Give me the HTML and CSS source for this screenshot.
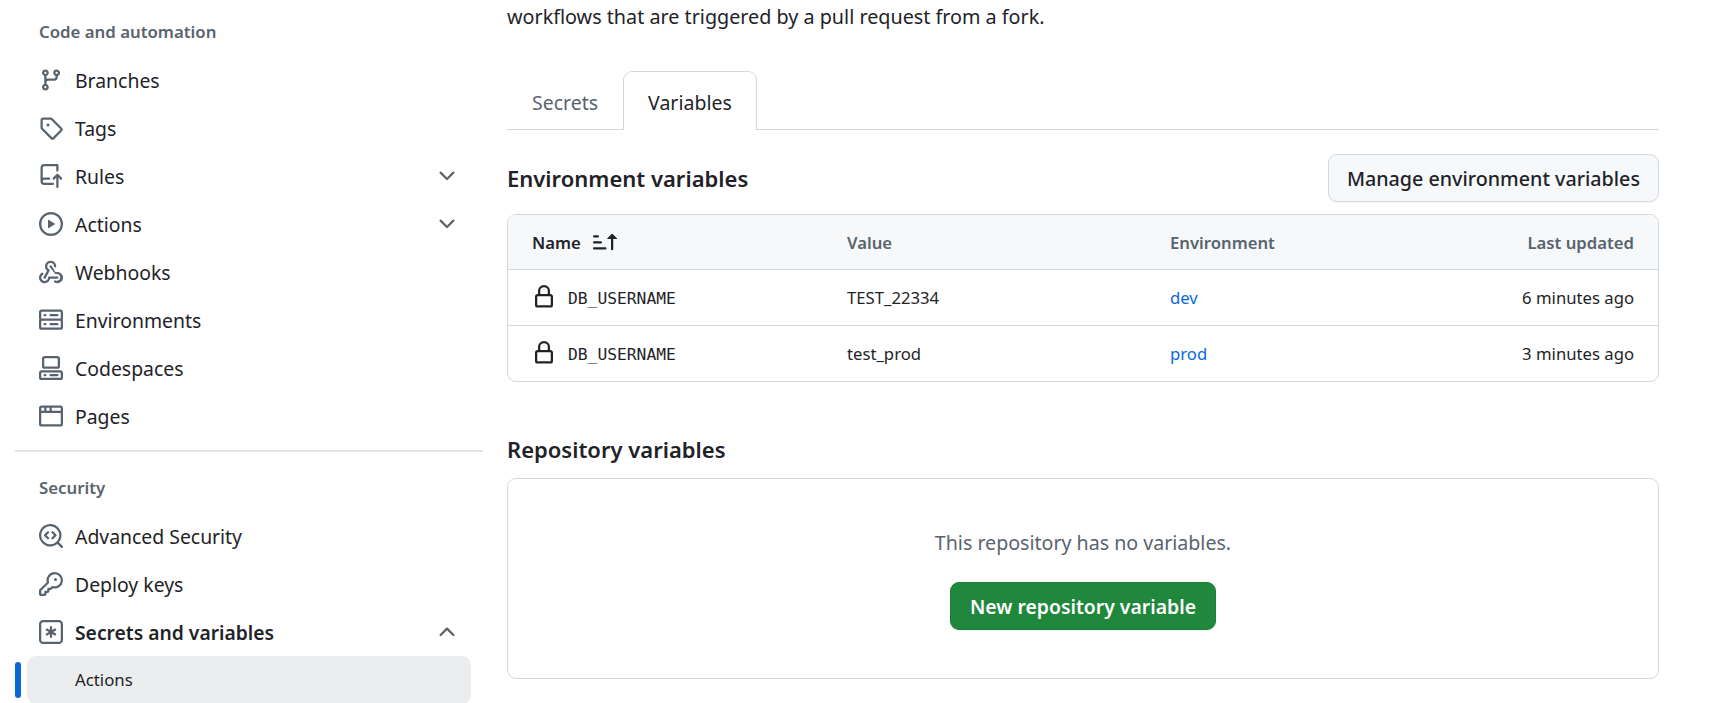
FILE: index.html
```html
<!DOCTYPE html>
<html lang="en">
<head>
<meta charset="utf-8">
<title>Actions secrets and variables</title>
<link rel="stylesheet" href="styles.css">
</head>
<body>
<div class="page">
  <nav class="sidebar">
    <h2 class="nav-heading">Code and automation</h2>
    <a class="nav-item"><svg class="icon" viewBox="0 0 16 16"><path d="M9.5 3.25a2.25 2.25 0 1 1 3 2.122V6A2.5 2.5 0 0 1 10 8.5H6a1 1 0 0 0-1 1v1.128a2.251 2.251 0 1 1-1.5 0V5.372a2.25 2.25 0 1 1 1.5 0v1.836A2.493 2.493 0 0 1 6 7h4a1 1 0 0 0 1-1v-.628A2.25 2.25 0 0 1 9.5 3.25Zm-6 0a.75.75 0 1 0 1.5 0 .75.75 0 0 0-1.5 0Zm8.25-.75a.75.75 0 1 0 0 1.5.75.75 0 0 0 0-1.5ZM4.25 12a.75.75 0 1 0 0 1.5.75.75 0 0 0 0-1.5Z"/></svg><span class="nav-label">Branches</span></a>
    <a class="nav-item"><svg class="icon" viewBox="0 0 16 16"><path d="M1 7.775V2.75C1 1.784 1.784 1 2.75 1h5.025c.464 0 .91.184 1.238.513l6.25 6.25a1.75 1.75 0 0 1 0 2.474l-5.026 5.026a1.75 1.75 0 0 1-2.474 0l-6.25-6.25A1.752 1.752 0 0 1 1 7.775Zm1.5 0c0 .066.026.13.073.177l6.25 6.25a.25.25 0 0 0 .354 0l5.025-5.025a.25.25 0 0 0 0-.354l-6.25-6.25a.25.25 0 0 0-.177-.073H2.75a.25.25 0 0 0-.25.25ZM6 5a1 1 0 1 1 0 2 1 1 0 0 1 0-2Z"/></svg><span class="nav-label">Tags</span></a>
    <a class="nav-item"><svg class="icon" viewBox="0 0 16 16"><path d="M1 2.5A2.5 2.5 0 0 1 3.5 0h8.75a.75.75 0 0 1 .75.75v3.5a.75.75 0 0 1-1.5 0V1.5h-8a1 1 0 0 0-1 1v6.708A2.493 2.493 0 0 1 3.5 9h3.25a.75.75 0 0 1 0 1.5H3.5a1 1 0 0 0 0 2h5.75a.75.75 0 0 1 0 1.5H3.5A2.5 2.5 0 0 1 1 11.5Zm13.23 7.79h-.001l-1.224-1.224v6.184a.75.75 0 0 1-1.5 0V9.066L10.28 10.29a.75.75 0 0 1-1.06-1.06l2.505-2.504a.75.75 0 0 1 1.06 0L15.29 9.23a.751.751 0 0 1-.018 1.042.751.751 0 0 1-1.042.018Z"/></svg><span class="nav-label">Rules</span><svg class="icon chevron" viewBox="0 0 16 16"><path d="M12.78 5.22a.749.749 0 0 1 0 1.06l-4.25 4.25a.749.749 0 0 1-1.06 0L3.22 6.28a.749.749 0 1 1 1.06-1.06L8 8.939l3.72-3.719a.749.749 0 0 1 1.06 0Z"/></svg></a>
    <a class="nav-item"><svg class="icon" viewBox="0 0 16 16"><path d="M8 0a8 8 0 1 1 0 16A8 8 0 0 1 8 0ZM1.5 8a6.5 6.5 0 1 0 13 0 6.5 6.5 0 0 0-13 0Zm4.879-2.773 4.264 2.559a.25.25 0 0 1 0 .428l-4.264 2.559A.25.25 0 0 1 6 10.559V5.442a.25.25 0 0 1 .379-.215Z"/></svg><span class="nav-label">Actions</span><svg class="icon chevron" viewBox="0 0 16 16"><path d="M12.78 5.22a.749.749 0 0 1 0 1.06l-4.25 4.25a.749.749 0 0 1-1.06 0L3.22 6.28a.749.749 0 1 1 1.06-1.06L8 8.939l3.72-3.719a.749.749 0 0 1 1.06 0Z"/></svg></a>
    <a class="nav-item"><svg class="icon" viewBox="0 0 16 16"><path d="M5.5 4.25a2.25 2.25 0 0 1 4.5 0 .75.75 0 0 0 1.5 0 3.75 3.75 0 1 0-6.14 2.889l-2.272 4.258a.75.75 0 0 0 1.324.706L7 7.25a.75.75 0 0 0-.309-1.015A2.25 2.25 0 0 1 5.5 4.25Z"/><path d="M7.364 3.607a.75.75 0 0 1 1.03.257l2.608 4.349a3.75 3.75 0 1 1-.628 6.785.75.75 0 0 1 .64-1.356 2.25 2.25 0 1 0 .36-4.23.75.75 0 0 1-.807-.34L7.107 4.637a.75.75 0 0 1 .257-1.03Z"/><path d="M2.9 8.776A.75.75 0 0 1 2.625 9.8 2.25 2.25 0 1 0 6 11.75a.75.75 0 0 1 .75-.751h5.5a.75.75 0 0 1 0 1.5H7.425a3.751 3.751 0 1 1-5.55-3.998.75.75 0 0 1 1.025.274Z"/></svg><span class="nav-label">Webhooks</span></a>
    <a class="nav-item"><svg class="icon" viewBox="0 0 16 16"><path d="M1.75 1h12.5c.966 0 1.75.784 1.75 1.75v4c0 .372-.116.717-.314 1 .198.283.314.628.314 1v4a1.75 1.75 0 0 1-1.75 1.75H1.75A1.75 1.75 0 0 1 0 12.75v-4c0-.358.109-.707.314-1a1.739 1.739 0 0 1-.314-1v-4C0 1.784.784 1 1.75 1ZM1.5 2.75v4c0 .138.112.25.25.25h12.5a.25.25 0 0 0 .25-.25v-4a.25.25 0 0 0-.25-.25H1.75a.25.25 0 0 0-.25.25Zm.25 5.75a.25.25 0 0 0-.25.25v4c0 .138.112.25.25.25h12.5a.25.25 0 0 0 .25-.25v-4a.25.25 0 0 0-.25-.25ZM7 4.75A.75.75 0 0 1 7.75 4h4.5a.75.75 0 0 1 0 1.5h-4.5A.75.75 0 0 1 7 4.75ZM7.75 10h4.5a.75.75 0 0 1 0 1.5h-4.5a.75.75 0 0 1 0-1.5ZM3 4.75A.75.75 0 0 1 3.75 4h.5a.75.75 0 0 1 0 1.5h-.5A.75.75 0 0 1 3 4.75ZM3.75 10h.5a.75.75 0 0 1 0 1.5h-.5a.75.75 0 0 1 0-1.5Z"/></svg><span class="nav-label">Environments</span></a>
    <a class="nav-item"><svg class="icon" viewBox="0 0 16 16"><path d="M0 11.25c0-.966.784-1.75 1.75-1.75h12.5c.966 0 1.75.784 1.75 1.75v3A1.75 1.75 0 0 1 14.25 16H1.75A1.75 1.75 0 0 1 0 14.25Zm2-9.5C2 .784 2.784 0 3.75 0h8.5C13.216 0 14 .784 14 1.75v5a1.75 1.75 0 0 1-1.75 1.75h-8.5A1.75 1.75 0 0 1 2 6.75Zm1.75-.25a.25.25 0 0 0-.25.25v5c0 .138.112.25.25.25h8.5a.25.25 0 0 0 .25-.25v-5a.25.25 0 0 0-.25-.25Zm-2 9.5a.25.25 0 0 0-.25.25v3c0 .138.112.25.25.25h12.5a.25.25 0 0 0 .25-.25v-3a.25.25 0 0 0-.25-.25Z"/><path d="M7 12.75a.75.75 0 0 1 .75-.75h4.5a.75.75 0 0 1 0 1.5h-4.5a.75.75 0 0 1-.75-.75Zm-4 0a.75.75 0 0 1 .75-.75h.5a.75.75 0 0 1 0 1.5h-.5a.75.75 0 0 1-.75-.75Z"/></svg><span class="nav-label">Codespaces</span></a>
    <a class="nav-item"><svg class="icon" viewBox="0 0 16 16"><path d="M0 2.75C0 1.784.784 1 1.75 1h12.5c.966 0 1.75.784 1.75 1.75v10.5A1.75 1.75 0 0 1 14.25 15H1.75A1.75 1.75 0 0 1 0 13.25ZM14.5 6h-13v7.25c0 .138.112.25.25.25h12.5a.25.25 0 0 0 .25-.25Zm-6-3.5v2h6V2.75a.25.25 0 0 0-.25-.25ZM5 2.5v2h2v-2Zm-3.25 0a.25.25 0 0 0-.25.25V4.5h2v-2Z"/></svg><span class="nav-label">Pages</span></a>
    <hr class="nav-divider">
    <h2 class="nav-heading">Security</h2>
    <a class="nav-item"><svg class="icon" viewBox="0 0 16 16"><path d="M8.47 4.97a.75.75 0 0 0 0 1.06L9.94 7.5 8.47 8.97a.75.75 0 1 0 1.06 1.06l2-2a.75.75 0 0 0 0-1.06l-2-2a.75.75 0 0 0-1.06 0ZM6.53 6.03a.75.75 0 0 0-1.06-1.06l-2 2a.75.75 0 0 0 0 1.06l2 2a.75.75 0 1 0 1.06-1.06L5.06 7.5l1.47-1.47Z"/><path d="M12.246 13.307a7.501 7.501 0 1 1 1.06-1.06l2.474 2.473a.749.749 0 0 1-.326 1.275.749.749 0 0 1-.734-.215ZM1.5 7.5a6.002 6.002 0 0 0 3.608 5.504 6.002 6.002 0 0 0 6.486-1.117.75.75 0 0 1 .292-.293A6 6 0 1 0 1.5 7.5Z"/></svg><span class="nav-label">Advanced Security</span></a>
    <a class="nav-item"><svg class="icon" viewBox="0 0 16 16"><path d="M10.5 0a5.499 5.499 0 1 1-1.288 10.848l-.932.932a.749.749 0 0 1-.53.22H7v.75a.749.749 0 0 1-.22.53l-.5.5a.749.749 0 0 1-.53.22H5v.75a.749.749 0 0 1-.22.53l-.5.5a.749.749 0 0 1-.53.22h-2A1.75 1.75 0 0 1 0 14.25v-2c0-.199.079-.389.22-.53l4.932-4.932A5.5 5.5 0 0 1 10.5 0Zm-4 5.5c-.001.431.069.86.205 1.269a.75.75 0 0 1-.181.768L1.5 12.56v1.69c0 .138.112.25.25.25h1.69l.06-.06v-1.19a.75.75 0 0 1 .75-.75h1.19l.06-.06v-1.19a.75.75 0 0 1 .75-.75h1.19l1.023-1.025a.75.75 0 0 1 .768-.18A4 4 0 1 0 6.5 5.5ZM11 6a1 1 0 1 1 0-2 1 1 0 0 1 0 2Z"/></svg><span class="nav-label">Deploy keys</span></a>
    <a class="nav-item nav-item-strong"><svg class="icon" viewBox="0 0 16 16"><path d="M0 2.75A2.75 2.75 0 0 1 2.75 0h10.5A2.75 2.75 0 0 1 16 2.75v10.5A2.75 2.75 0 0 1 13.25 16H2.75A2.75 2.75 0 0 1 0 13.25ZM2.75 1.5c-.69 0-1.25.56-1.25 1.25v10.5c0 .69.56 1.25 1.25 1.25h10.5c.69 0 1.25-.56 1.25-1.25V2.75c0-.69-.56-1.25-1.25-1.25Z"/><path d="M8 4a.75.75 0 0 1 .75.75V6.7l1.69-.975a.75.75 0 0 1 .75 1.3L9.5 8l1.69.976a.75.75 0 0 1-.75 1.298L8.75 9.3v1.951a.75.75 0 0 1-1.5 0V9.299l-1.69.976a.75.75 0 0 1-.75-1.3L6.5 8l-1.69-.975a.75.75 0 0 1 .75-1.3l1.69.976V4.75A.75.75 0 0 1 8 4Z"/></svg><span class="nav-label">Secrets and variables</span><svg class="icon chevron" viewBox="0 0 16 16"><path d="M3.22 10.53a.749.749 0 0 1 0-1.06l4.25-4.25a.749.749 0 0 1 1.06 0l4.25 4.25a.749.749 0 1 1-1.06 1.06L8 6.811 4.28 10.53a.749.749 0 0 1-1.06 0Z"/></svg></a>
    <a class="nav-sub"><span class="nav-marker"></span><span class="nav-sub-box">Actions</span></a>
  </nav>
  <main class="content">
    <p class="intro">workflows that are triggered by a pull request from a fork.</p>
    <div class="tabs">
      <a class="tab">Secrets</a>
      <a class="tab tab-active">Variables</a>
    </div>
    <div class="section-head">
      <h3 class="section-title">Environment variables</h3>
      <a class="btn">Manage environment variables</a>
    </div>
    <div class="table">
      <div class="row row-head">
        <div class="cell-name"><strong>Name</strong><svg class="icon sort" viewBox="0 0 16 16"><path d="m12.927 2.573 3 3A.25.25 0 0 1 15.75 6H13.5v6.75a.75.75 0 0 1-1.5 0V6H9.75a.25.25 0 0 1-.177-.427l3-3a.25.25 0 0 1 .354 0ZM0 12.25a.75.75 0 0 1 .75-.75h7.5a.75.75 0 0 1 0 1.5H.75a.75.75 0 0 1-.75-.75Zm0-4a.75.75 0 0 1 .75-.75h4.5a.75.75 0 0 1 0 1.5H.75A.75.75 0 0 1 0 8.25Zm0-4a.75.75 0 0 1 .75-.75h2.5a.75.75 0 0 1 0 1.5H.75A.75.75 0 0 1 0 4.25Z"/></svg></div>
        <div>Value</div>
        <div>Environment</div>
        <div class="cell-right">Last updated</div>
      </div>
      <div class="row">
        <div class="cell-name"><svg class="icon lock" viewBox="0 0 16 16"><path d="M4 4a4 4 0 0 1 8 0v2h.25c.966 0 1.75.784 1.75 1.75v5.5A1.75 1.75 0 0 1 12.25 15h-8.5A1.75 1.75 0 0 1 2 13.25v-5.5C2 6.784 2.784 6 3.75 6H4Zm8.25 3.5h-8.5a.25.25 0 0 0-.25.25v5.5c0 .138.112.25.25.25h8.5a.25.25 0 0 0 .25-.25v-5.5a.25.25 0 0 0-.25-.25ZM10.5 6V4a2.5 2.5 0 1 0-5 0v2Z"/></svg><code>DB_USERNAME</code></div>
        <div>TEST_22334</div>
        <div><a class="link">dev</a></div>
        <div class="cell-right">6 minutes ago</div>
      </div>
      <div class="row">
        <div class="cell-name"><svg class="icon lock" viewBox="0 0 16 16"><path d="M4 4a4 4 0 0 1 8 0v2h.25c.966 0 1.75.784 1.75 1.75v5.5A1.75 1.75 0 0 1 12.25 15h-8.5A1.75 1.75 0 0 1 2 13.25v-5.5C2 6.784 2.784 6 3.75 6H4Zm8.25 3.5h-8.5a.25.25 0 0 0-.25.25v5.5c0 .138.112.25.25.25h8.5a.25.25 0 0 0 .25-.25v-5.5a.25.25 0 0 0-.25-.25ZM10.5 6V4a2.5 2.5 0 1 0-5 0v2Z"/></svg><code>DB_USERNAME</code></div>
        <div>test_prod</div>
        <div><a class="link">prod</a></div>
        <div class="cell-right">3 minutes ago</div>
      </div>
    </div>
    <h3 class="section-title section-title-repo">Repository variables</h3>
    <div class="blank">
      <p class="blank-text">This repository has no variables.</p>
      <a class="btn btn-primary">New repository variable</a>
    </div>
  </main>
</div>
</body>
</html>
```

FILE: styles.css
```css
* { box-sizing: border-box; }
html, body { margin: 0; height: 100%; overflow: hidden; background: #fff; }
body {
  font-family: "Noto Sans", sans-serif;
  font-size: 19.7px;
  color: #1f2328;
}
.page { display: flex; align-items: flex-start; height: 703px; overflow: hidden; }
.icon { width: 24px; height: 24px; flex: none; fill: #59636e; display: block; }

.sidebar { width: 507px; flex: none; padding: 8px 0 0 15px; }
.nav-heading {
  margin: 0;
  height: 46px;
  margin-bottom: 2px;
  display: flex;
  align-items: center;
  padding-left: 24px;
  font-size: 16.8px;
  font-weight: 600;
  color: #59636e;
}
.nav-item {
  width: 444px;
  height: 48px;
  margin-left: 12px;
  display: flex;
  align-items: center;
  gap: 12px;
  padding: 0 12px;
}
.nav-label { font-size: 19.4px; }
.nav-item .chevron { margin-left: auto; }
.nav-item-strong { font-weight: 600; }
.nav-item-strong .nav-label { font-size: 19.3px; }
.nav-divider { margin: 10px 0 12px; width: 468px; height: 2px; border: 0; background: #e1e5ea; }
.nav-sub { display: flex; align-items: center; height: 48px; }
.nav-marker { width: 6px; height: 36px; border-radius: 3px; background: #0969da; flex: none; }
.nav-sub-box {
  width: 444px;
  height: 48px;
  margin-left: 6px;
  padding: 0 0 2px 48px;
  display: flex;
  align-items: center;
  font-size: 16.8px;
  background: #ecedef;
  border-radius: 9px;
}

.content { width: 1152px; flex: none; }
.intro { margin: 0; line-height: 34px; font-size: 19.75px; }
.tabs {
  margin-top: 37px;
  height: 59px;
  display: flex;
  border-bottom: 1px solid #d1d9e0;
}
.tab {
  height: 59px;
  padding: 3px 24px 0;
  display: flex;
  align-items: center;
  font-size: 19.5px;
  color: #59636e;
  border: 1px solid transparent;
  border-bottom: 0;
  border-radius: 9px 9px 0 0;
}
.tab-active { color: #1f2328; background: #fff; border-color: #d1d9e0; }

.section-head { margin-top: 24px; display: flex; justify-content: space-between; align-items: center; }
.section-title { margin: 0; font-size: 22px; font-weight: 600; }
.btn {
  height: 48px;
  display: flex;
  align-items: center;
  padding: 1px 18px 0;
  font-weight: 500;
  background: #f6f8fa;
  border: 1px solid #d1d9e0;
  border-radius: 9px;
  box-shadow: 0 1px 0 #1f23280a;
}
.btn-primary { background: #1f883d; border-color: #1c7d38; color: #fff; font-weight: 600; font-size: 19.4px; padding: 1px 19px 0; }

.table { margin-top: 12px; border: 1px solid #d1d9e0; border-radius: 9px; overflow: hidden; font-size: 16.7px; }
.row {
  height: 56px;
  display: grid;
  grid-template-columns: 315px 323px 1fr 300px;
  align-items: center;
  padding: 0 24px;
  border-top: 1px solid #d1d9e0;
}
.row-head { height: 54px; border-top: 0; background: #f6f8fa; color: #59636e; font-weight: 600; }
.cell-name { display: flex; align-items: center; }
.cell-name strong { color: #1f2328; font-weight: 600; }
.cell-right { text-align: right; }
.sort { margin-left: 12px; fill: #1f2328; }
.lock { margin-right: 12px; fill: #1f2328; transform: translateY(-1px); }
code { font-family: "DejaVu Sans Mono", monospace; font-size: 16.3px; padding-top: 2px; }
.link { color: #0969da; }

.section-title-repo { margin-top: 53px; line-height: 28px; }
.blank {
  margin-top: 15px;
  height: 201px;
  border: 1px solid #d1d9e0;
  border-radius: 9px;
  display: flex;
  flex-direction: column;
  align-items: center;
  padding-top: 47px;
}
.blank-text { margin: 0 0 22px; line-height: 34px; color: #59636e; font-size: 19.6px; }
```
